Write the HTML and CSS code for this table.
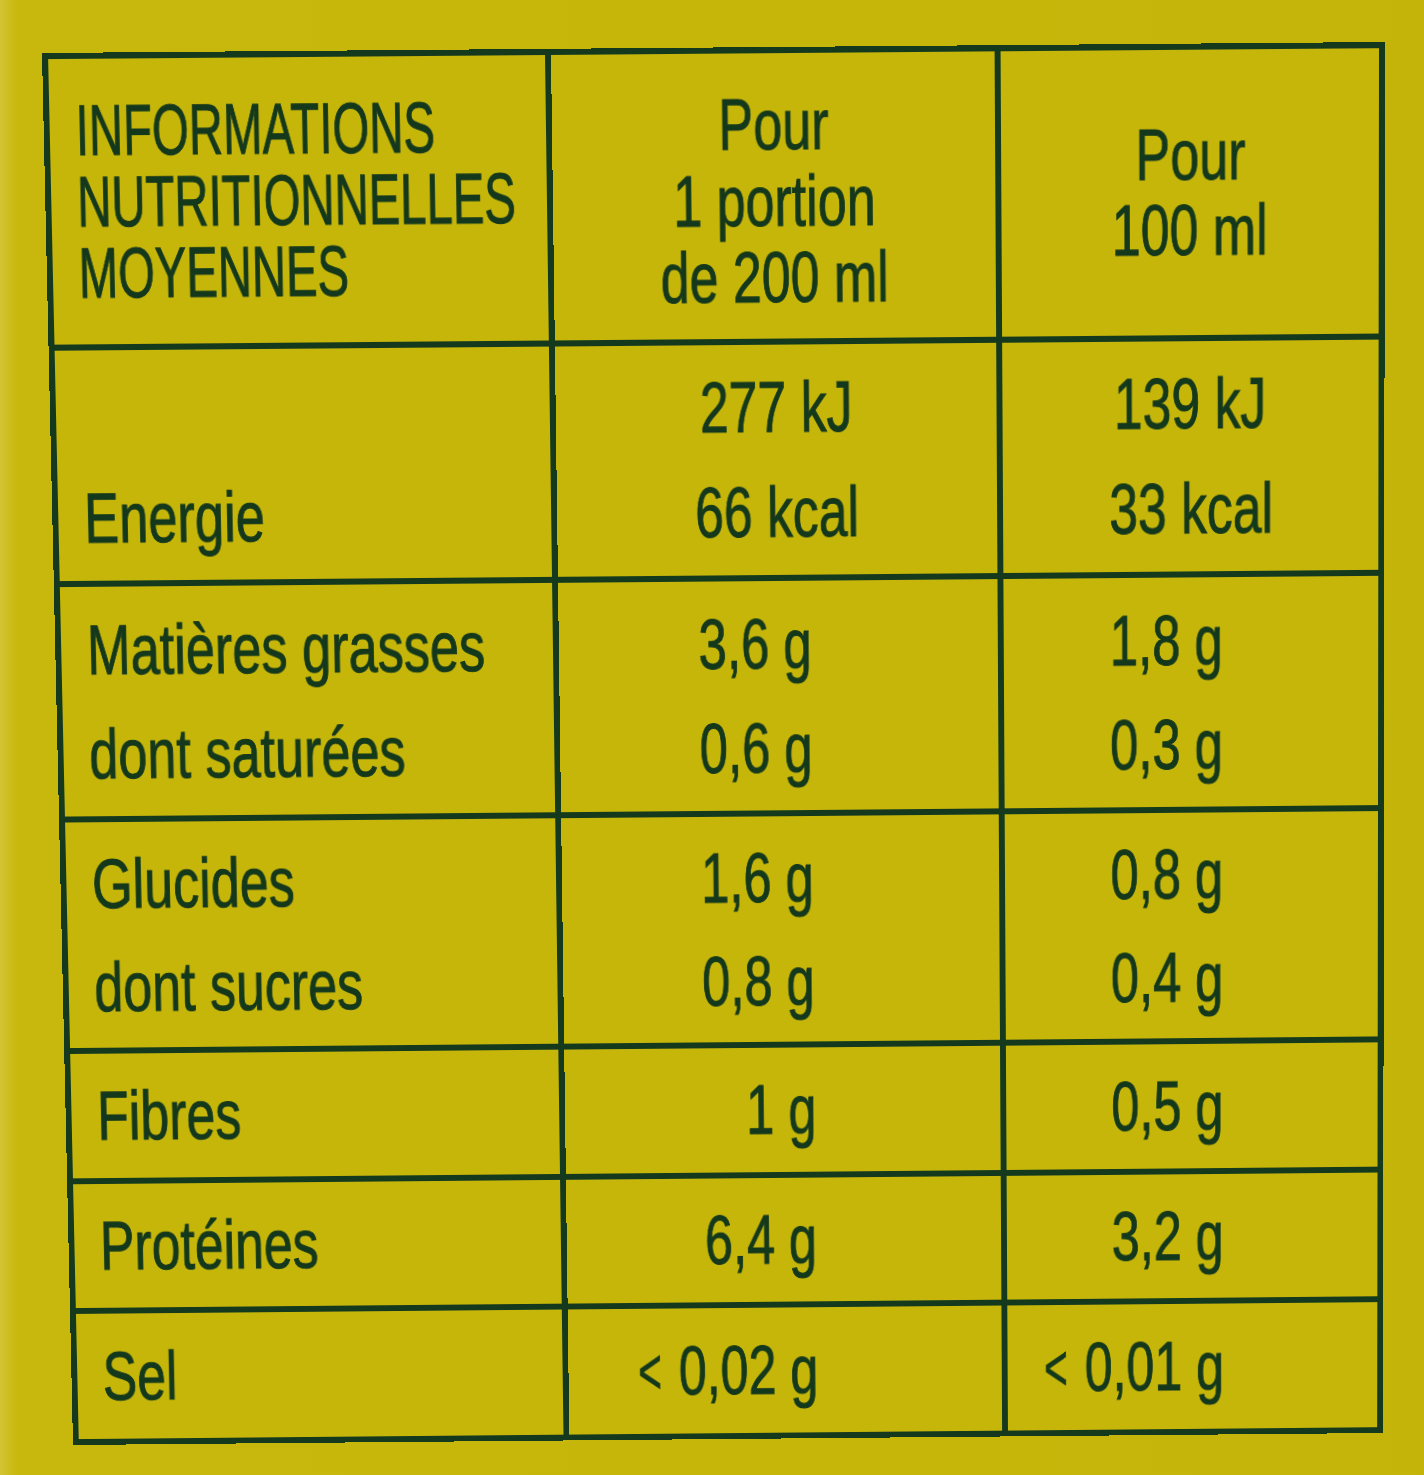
FILE: index.html
```html
<!DOCTYPE html>
<html lang="fr">
<head>
<meta charset="utf-8">
<title>Informations nutritionnelles</title>
<link rel="stylesheet" href="styles.css">
</head>
<body>
<div class="photo">
  <div class="grid">
    <div class="cell head left title">
      <div class="ln"><span class="sx">INFORMATIONS</span></div>
      <div class="ln"><span class="sx">NUTRITIONNELLES</span></div>
      <div class="ln"><span class="sx">MOYENNES</span></div>
    </div>
    <div class="cell head center h2">
      <div class="ln"><span class="sx">Pour</span></div>
      <div class="ln"><span class="sx">1 portion</span></div>
      <div class="ln"><span class="sx">de 200 ml</span></div>
    </div>
    <div class="cell head center">
      <div class="ln"><span class="sx">Pour</span></div>
      <div class="ln"><span class="sx">100 ml</span></div>
    </div>

    <div class="cell left">
      <div class="ln">&nbsp;</div>
      <div class="ln"><span class="sx">Energie</span></div>
    </div>
    <div class="cell center">
      <div class="ln"><span class="sx">277 kJ</span></div>
      <div class="ln"><span class="sx">66 kcal</span></div>
    </div>
    <div class="cell center">
      <div class="ln"><span class="sx">139 kJ</span></div>
      <div class="ln"><span class="sx">33 kcal</span></div>
    </div>

    <div class="cell left">
      <div class="ln"><span class="sx">Matières grasses</span></div>
      <div class="ln"><span class="sx">dont saturées</span></div>
    </div>
    <div class="cell right c2">
      <div class="ln"><span class="sx">3,6 g</span></div>
      <div class="ln"><span class="sx">0,6 g</span></div>
    </div>
    <div class="cell right c3">
      <div class="ln"><span class="sx">1,8 g</span></div>
      <div class="ln"><span class="sx">0,3 g</span></div>
    </div>

    <div class="cell left">
      <div class="ln"><span class="sx">Glucides</span></div>
      <div class="ln"><span class="sx">dont sucres</span></div>
    </div>
    <div class="cell right c2">
      <div class="ln"><span class="sx">1,6 g</span></div>
      <div class="ln"><span class="sx">0,8 g</span></div>
    </div>
    <div class="cell right c3">
      <div class="ln"><span class="sx">0,8 g</span></div>
      <div class="ln"><span class="sx">0,4 g</span></div>
    </div>

    <div class="cell left">
      <div class="ln"><span class="sx">Fibres</span></div>
    </div>
    <div class="cell right c2">
      <div class="ln"><span class="sx">1 g</span></div>
    </div>
    <div class="cell right c3">
      <div class="ln"><span class="sx">0,5 g</span></div>
    </div>

    <div class="cell left">
      <div class="ln"><span class="sx">Protéines</span></div>
    </div>
    <div class="cell right c2">
      <div class="ln"><span class="sx">6,4 g</span></div>
    </div>
    <div class="cell right c3">
      <div class="ln"><span class="sx">3,2 g</span></div>
    </div>

    <div class="cell left">
      <div class="ln"><span class="sx">Sel</span></div>
    </div>
    <div class="cell right c2">
      <div class="ln"><span class="sx"><span class="lt">&lt;</span> 0,02 g</span></div>
    </div>
    <div class="cell right c3">
      <div class="ln"><span class="sx"><span class="lt">&lt;</span> 0,01 g</span></div>
    </div>
  </div>
</div>
</body>
</html>
```

FILE: styles.css
```css
html, body {
  margin: 0;
  padding: 0;
}

body {
  width: 1424px;
  height: 1475px;
  overflow: hidden;
  background: linear-gradient(90deg, #d3c434 0px, #c8b70c 18px, #c7b60a 60%, #c4b309 100%);
  font-family: "Liberation Sans", Arial, sans-serif;
  color: #14381c;
}

.photo {
  width: 1344px;
  height: 1392px;
  transform-origin: 0 0;
  transform: matrix3d(1.000221, -0.0081553, 0, 0.0000006966,
                      0.023591, 1.026151, 0, 0.0000180977,
                      0, 0, 1, 0,
                      42, 53, 0, 1);
}

.grid {
  box-sizing: border-box;
  width: 1344px;
  height: 1392px;
  display: grid;
  grid-template-columns: 497px 444px 379px;
  grid-template-rows: 280px 228px 229px 227px 126px 126px 128px;
  gap: 6px;
  padding: 6px;
  background: #15391d;
}

.cell {
  background: #c7b60a;
  display: flex;
  flex-direction: column;
  justify-content: center;
  font-size: 70px;
  line-height: 104px;
  min-width: 0;
}

.ln {
  display: flex;
  white-space: nowrap;
}

.sx {
  display: inline-block;
  white-space: nowrap;
  transform: scaleX(0.755);
  -webkit-text-stroke: 1px #14381c;
}

.lt {
  display: inline-block;
  transform: scale(0.8, 0.95);
}

.left {
  padding-left: 26px;
}

.left .ln {
  justify-content: flex-start;
}

.left .sx {
  transform-origin: left center;
}

.center .ln {
  justify-content: center;
}

.center .sx {
  transform-origin: center center;
  transform: scaleX(0.745);
}

.right .ln {
  justify-content: flex-end;
}

.right .sx {
  transform-origin: right center;
  transform: scaleX(0.735);
}

.c2 {
  padding-right: 188px;
}

.c3 {
  padding-right: 157px;
}

.head {
  line-height: 74px;
}

.head.h2 {
  line-height: 75px;
  padding-top: 10px;
}

.head.title {
  line-height: 70px;
}

.head.title .sx {
  transform: scaleX(0.677);
}
```
